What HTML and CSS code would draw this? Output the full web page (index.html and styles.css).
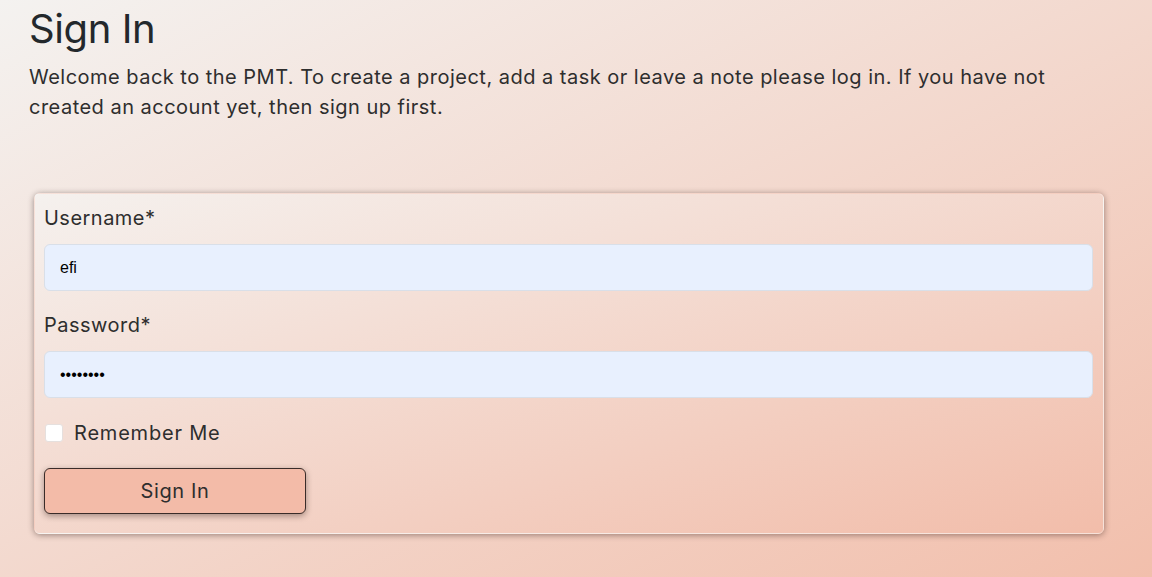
FILE: index.html
```html
<!DOCTYPE html>
<html lang="en">
<head>
<meta charset="utf-8">
<title>Sign In</title>
<link rel="stylesheet" href="styles.css">
</head>
<body>
<main class="page">
  <h1 class="title">Sign In</h1>
  <p class="intro">Welcome back to the PMT. To create a project, add a task or leave a note please log in. If you have not created an account yet, then sign up first.</p>
  <form class="card">
    <div class="field">
      <label class="label" for="username">Username*</label>
      <input class="input" id="username" type="text" value="efi">
    </div>
    <div class="field">
      <label class="label" for="password">Password*</label>
      <input class="input" id="password" type="password" value="12345678">
    </div>
    <label class="check">
      <input class="checkbox" type="checkbox">
      <span>Remember Me</span>
    </label>
    <button class="btn" type="button">Sign In</button>
  </form>
</main>
</body>
</html>
```
FILE: styles.css
```css
html, body {
  margin: 0;
  padding: 0;
}
body {
  min-height: 577px;
  background: linear-gradient(to bottom right, #f4f2f0, #f2bfac);
  font-family: "Inter", "Open Sans", sans-serif;
  color: #2e2e2e;
}
.page {
  padding: 0 29px;
}
.title {
  margin: 5px 0 0;
  font-size: 40px;
  line-height: 48px;
  font-weight: 400;
  letter-spacing: -0.4px;
  color: #23282c;
}
.intro {
  margin: 9px 0 71px;
  font-size: 20px;
  line-height: 30px;
  letter-spacing: 0.48px;
}
.card {
  margin: 0 19px 0 5px;
  padding: 9px 10px 19px 9px;
  border: 1px solid rgba(255, 255, 255, 0.25);
  border-radius: 6px;
  background: linear-gradient(to bottom right, #f5f1ee, #f2bdaa);
  box-shadow: 0 1px 6px rgba(40, 20, 15, 0.45);
  display: flex;
  flex-direction: column;
  align-items: flex-start;
}
.field {
  width: 100%;
  display: flex;
  flex-direction: column;
  margin-bottom: 19px;
}
.field + .field {
  margin-bottom: 20px;
}
.label {
  font-size: 20px;
  line-height: 30px;
  letter-spacing: 0.48px;
  margin-bottom: 11px;
}
.input {
  box-sizing: border-box;
  width: 100%;
  height: 47px;
  margin: 0;
  padding: 0 15px;
  border: 1px solid #d9dfe8;
  border-radius: 6px;
  background: #e8f0fe;
  font-family: "Liberation Sans", Arial, sans-serif;
  font-size: 16px;
  color: #000;
  outline: none;
}
.check {
  display: flex;
  align-items: center;
  font-size: 20px;
  line-height: 30px;
  letter-spacing: 0.8px;
  margin-bottom: 20px;
}
.checkbox {
  appearance: none;
  -webkit-appearance: none;
  width: 18px;
  height: 18px;
  margin: 0 11px 0 1px;
  border: 1px solid #e6e0de;
  border-radius: 3px;
  background: #fff;
}
.btn {
  box-sizing: border-box;
  width: 262px;
  height: 46px;
  margin: 0;
  border: 1px solid #3a2c29;
  border-radius: 6px;
  background: #f3bba8;
  box-shadow: 0 2px 6px rgba(40, 20, 15, 0.4);
  font-family: "Inter", "Open Sans", sans-serif;
  font-size: 20px;
  letter-spacing: 0.6px;
  color: #2e2e2e;
  cursor: pointer;
}
```
